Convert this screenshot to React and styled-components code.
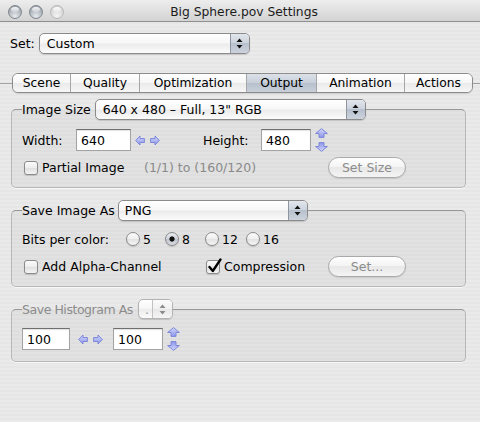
import React from 'react';
import styled, { createGlobalStyle } from 'styled-components';

const Global = createGlobalStyle`
  html, body { margin: 0; padding: 0; }
  body {
    font-family: "DejaVu Sans", "Lucida Grande", sans-serif;
    font-size: 12.5px;
    color: #000;
    background: #e8e8e8;
  }
  * { box-sizing: border-box; }
`;

const Window = styled.div`
  width: 480px;
  height: 422px;
  overflow: hidden;
  display: flex;
  flex-direction: column;
  background: repeating-linear-gradient(180deg, #eaeaea 0px, #eaeaea 2px, #e6e6e6 2px, #e6e6e6 4px);
`;

const TitleBar = styled.div`
  flex: none;
  height: 22px;
  display: grid;
  grid-template-columns: 1fr auto 1fr;
  align-items: center;
  padding: 2px 0 0 8px;
  background: linear-gradient(#ededed, #d3d3d3);
  border-bottom: 1px solid #8f8f8f;
`;

const Lights = styled.div`
  display: flex;
  gap: 7px;
  justify-self: start;
`;

const Light = styled.span`
  position: relative;
  width: 14px;
  height: 14px;
  border-radius: 50%;
  border: 1px solid ${p => (p.$dim ? '#b9b9b9' : '#80868d')};
  background: ${p =>
    p.$dim
      ? 'radial-gradient(circle at 50% 80%, #f4f4f4 0%, #dadada 55%, #cbcbcb 100%)'
      : 'radial-gradient(circle at 50% 85%, #e8ecf0 0%, #b4bac1 50%, #8f969e 100%)'};
  &::after {
    content: '';
    position: absolute;
    left: 2px;
    right: 2px;
    top: 1px;
    height: 5px;
    border-radius: 50%;
    background: linear-gradient(rgba(255, 255, 255, 0.95), rgba(255, 255, 255, 0.25));
  }
`;

const Title = styled.div`
  font-size: 12.3px;
  color: #1c1c1c;
  white-space: nowrap;
`;

const Body = styled.div`
  display: flex;
  flex-direction: column;
`;

const SetRow = styled.div`
  display: flex;
  align-items: center;
  gap: 4px;
  padding: 11px 0 0 10px;
`;

const Popup = styled.div`
  flex: none;
  width: ${p => p.$w}px;
  height: ${p => p.$h || 21}px;
  display: flex;
  border: 1px solid ${p => (p.$disabled ? '#b3b3b3' : '#8a8a8a')};
  border-radius: 5px;
  overflow: hidden;
  box-shadow: 0 1px 1px rgba(0, 0, 0, 0.14);
  background: linear-gradient(#ffffff, #f7f7f7 45%, #ececec 55%, #fbfbfb);
  color: ${p => (p.$disabled ? '#9a9a9a' : '#000')};
`;

const PopupText = styled.span`
  flex: 1;
  display: flex;
  align-items: center;
  padding-left: ${p => p.$pl ?? 7}px;
  white-space: nowrap;
  overflow: hidden;
`;

const PopupCap = styled.span`
  flex: none;
  width: ${p => p.$w || 19}px;
  display: flex;
  align-items: center;
  justify-content: center;
  border-left: 1px solid ${p => (p.$disabled ? '#c2c2c2' : '#8f96a2')};
  background: ${p =>
    p.$disabled
      ? 'linear-gradient(#fbfbfb, #f1f1f1 50%, #e7e7e7 50%, #f5f5f5)'
      : 'linear-gradient(#e2e6ed, #cbd2dc 50%, #b7c0cd 50%, #ccd3dd)'};
`;

const CapArrows = ({ color = '#111' }) => (
  <svg width="7" height="11" viewBox="0 0 7 11">
    <path d="M3.5 0.5 L6.5 4 L0.5 4 Z" fill={color} />
    <path d="M3.5 10.5 L6.5 7 L0.5 7 Z" fill={color} />
  </svg>
);

const TabStrip = styled.div`
  display: flex;
  align-items: center;
  margin-top: 19px;
`;

const TabLine = styled.div`
  flex: ${p => (p.$w ? 'none' : '1')};
  width: ${p => (p.$w ? `${p.$w}px` : 'auto')};
  height: 1px;
  background: #a2a2a2;
`;

const Tabs = styled.div`
  display: flex;
  height: 20px;
  border: 1px solid #8c8c8c;
  border-radius: 6px;
  overflow: hidden;
  box-shadow: 0 1px 1px rgba(0, 0, 0, 0.12);
`;

const Tab = styled.div`
  width: ${p => p.$w}px;
  display: flex;
  align-items: center;
  justify-content: center;
  font-size: 12.3px;
  white-space: nowrap;
  border-left: ${p => (p.$first ? 'none' : '1px solid #a6a6a6')};
  background: ${p =>
    p.$active
      ? 'linear-gradient(#dce1e8, #c8cfd9 50%, #b6bfcc 50%, #c9d0da)'
      : 'linear-gradient(#ffffff, #f6f6f6 50%, #e9e9e9 50%, #f7f7f7)'};
`;

const Group = styled.fieldset`
  margin: ${p => p.$mt}px 0 0 11px;
  width: 455px;
  min-width: 0;
  padding: ${p => p.$pt}px 10px ${p => p.$pb}px 10px;
  border: 1px solid #b7b7b7;
  border-top-color: #969696;
  border-radius: 5px;
  background: rgba(0, 0, 0, 0.03);
  box-shadow: 0 1px 0 rgba(255, 255, 255, 0.7);
  display: flex;
  flex-direction: column;
  gap: ${p => p.$gap}px;
`;

const Legend = styled.legend`
  padding: 0;
  display: flex;
  align-items: center;
  gap: ${p => p.$gap ?? 4}px;
  white-space: nowrap;
  color: ${p => (p.$disabled ? '#8c8c8c' : '#000')};
  letter-spacing: ${p => p.$ls || 0}px;
`;

const Row = styled.div`
  display: flex;
  align-items: center;
  height: ${p => p.$h}px;
`;

const Label = styled.span`
  flex: none;
  width: ${p => (p.$w ? `${p.$w}px` : 'auto')};
  margin-left: ${p => p.$ml || 0}px;
  white-space: nowrap;
  color: ${p => (p.$muted ? '#8a8a8a' : '#000')};
`;

const Field = styled.input`
  flex: none;
  width: ${p => p.$w}px;
  height: 22px;
  margin: 0 0 0 ${p => p.$ml || 0}px;
  padding: 0 0 0 4px;
  font: inherit;
  color: #000;
  background: #fff;
  border: 1px solid #a3a3a3;
  border-top-color: #6f6f6f;
  box-shadow: inset 0 1px 1px rgba(0, 0, 0, 0.12);
  outline: none;
`;

const Stepper = styled.div`
  flex: none;
  display: flex;
  flex-direction: ${p => (p.$vertical ? 'column' : 'row')};
  gap: ${p => (p.$vertical ? 4 : 5)}px;
  margin-left: ${p => p.$ml || 0}px;
`;

const ArrowDefs = () => (
  <svg width="0" height="0" style={{ position: 'absolute' }}>
    <defs>
      <linearGradient id="lav" x1="0" y1="0" x2="0" y2="1">
        <stop offset="0" stopColor="#d2d6fb" />
        <stop offset="1" stopColor="#8e98ec" />
      </linearGradient>
    </defs>
  </svg>
);

const HArrow = ({ flip }) => (
  <svg width="10" height="11" viewBox="0 0 10 11" style={flip ? { transform: 'scaleX(-1)' } : undefined}>
    <path d="M0.6 5.5 L5 1 V3.5 H9.4 V7.5 H5 V10 Z" fill="url(#lav)" stroke="#7681d6" strokeWidth="0.9" strokeLinejoin="round" />
  </svg>
);

const VArrow = ({ flip }) => (
  <svg width="13" height="10" viewBox="0 0 13 10" style={flip ? { transform: 'scaleY(-1)' } : undefined}>
    <path d="M6.5 0.6 L12.4 5.5 H9 V9.4 H4 V5.5 H0.6 Z" fill="url(#lav)" stroke="#7681d6" strokeWidth="0.9" strokeLinejoin="round" />
  </svg>
);

const LeftRight = ({ ml }) => (
  <Stepper $ml={ml}>
    <HArrow />
    <HArrow flip />
  </Stepper>
);

const UpDown = ({ ml }) => (
  <Stepper $vertical $ml={ml}>
    <VArrow />
    <VArrow flip />
  </Stepper>
);

const CheckLabel = styled.label`
  flex: none;
  width: ${p => p.$w}px;
  display: flex;
  align-items: center;
  gap: 4px;
  white-space: nowrap;
`;

const Box = styled.span`
  position: relative;
  flex: none;
  width: 14px;
  height: 14px;
  margin-left: 2px;
  border: 1px solid #8a8a8a;
  border-radius: 3px;
  background: linear-gradient(#fbfbfb, #ececec 50%, #dfdfdf 50%, #f4f4f4);
  box-shadow: 0 1px 1px rgba(0, 0, 0, 0.14);
`;

const Tick = styled.svg`
  position: absolute;
  left: 0px;
  top: -3px;
`;

const Check = ({ w, checked, children }) => (
  <CheckLabel $w={w}>
    <Box>
      {checked && (
        <Tick width="15" height="16" viewBox="0 0 15 16">
          <path d="M2.5 9 L5.8 13 L13.5 1.5" fill="none" stroke="#000" strokeWidth="2.3" strokeLinecap="round" strokeLinejoin="round" />
        </Tick>
      )}
    </Box>
    {children}
  </CheckLabel>
);

const RadioItem = styled.label`
  flex: none;
  width: ${p => (p.$w ? `${p.$w}px` : 'auto')};
  display: flex;
  align-items: center;
  gap: 3px;
`;

const RadioDot = styled.span`
  flex: none;
  width: 14px;
  height: 14px;
  border-radius: 50%;
  border: 1px solid #8a8a8a;
  box-shadow: 0 1px 1px rgba(0, 0, 0, 0.14);
  background: ${p =>
    p.$on
      ? 'radial-gradient(circle at 50% 50%, #111 0, #111 2.2px, rgba(0,0,0,0) 3px), linear-gradient(#e9ebef, #cfd4db 50%, #bfc5ce 50%, #d7dbe1)'
      : 'linear-gradient(#fcfcfc, #eeeeee 50%, #e1e1e1 50%, #f7f7f7)'};
`;

const Radio = ({ w, on, children }) => (
  <RadioItem $w={w}>
    <RadioDot $on={on} />
    {children}
  </RadioItem>
);

const PillButton = styled.button`
  flex: none;
  width: 78px;
  height: 21px;
  padding: 0;
  font: inherit;
  color: #8c8c8c;
  border: 1px solid #a9a9a9;
  border-radius: 11px;
  background: linear-gradient(#fefefe, #f3f3f3 50%, #e8e8e8 50%, #f4f4f4);
  box-shadow: 0 1px 1px rgba(0, 0, 0, 0.1);
`;

const tabs = [
  ['Scene', 57],
  ['Quality', 69],
  ['Optimization', 107],
  ['Output', 70],
  ['Animation', 88],
  ['Actions', 68],
];

export default function App() {
  return (
    <>
      <Global />
      <ArrowDefs />
      <Window>
        <TitleBar>
          <Lights>
            <Light />
            <Light />
            <Light $dim />
          </Lights>
          <Title>Big Sphere.pov Settings</Title>
          <span />
        </TitleBar>
        <Body>
          <SetRow>
            <Label>Set:</Label>
            <Popup $w={211}>
              <PopupText>Custom</PopupText>
              <PopupCap>
                <CapArrows />
              </PopupCap>
            </Popup>
          </SetRow>

          <TabStrip>
            <TabLine $w={12} />
            <Tabs>
              {tabs.map(([name, w], i) => (
                <Tab key={name} $w={w} $first={i === 0} $active={name === 'Output'}>
                  {name}
                </Tab>
              ))}
            </Tabs>
            <TabLine />
          </TabStrip>

          <Group $mt={6} $pt={9} $pb={9} $gap={6}>
            <Legend>
              Image Size
              <Popup $w={271}>
                <PopupText>640 x 480 – Full, 13" RGB</PopupText>
                <PopupCap>
                  <CapArrows />
                </PopupCap>
              </Popup>
            </Legend>
            <Row $h={22}>
              <Label $w={54}>Width:</Label>
              <Field $w={55} readOnly value="640" />
              <LeftRight ml={4} />
              <Label $w={58} $ml={43}>Height:</Label>
              <Field $w={50} readOnly value="480" />
              <UpDown ml={4} />
            </Row>
            <Row $h={21}>
              <Check w={122}>Partial Image</Check>
              <Label $w={184} $muted>(1/1) to (160/120)</Label>
              <PillButton>Set Size</PillButton>
            </Row>
          </Group>

          <Group $mt={12} $pt={10} $pb={9} $gap={9}>
            <Legend $gap={3}>
              Save Image As
              <Popup $w={190}>
                <PopupText $pl={6}>PNG</PopupText>
                <PopupCap>
                  <CapArrows />
                </PopupCap>
              </Popup>
            </Legend>
            <Row $h={16}>
              <Label $w={104}>Bits per color:</Label>
              <Radio w={39}>5</Radio>
              <Radio w={40} on>8</Radio>
              <Radio w={41}>12</Radio>
              <Radio>16</Radio>
            </Row>
            <Row $h={21}>
              <Check w={182}>Add Alpha-Channel</Check>
              <Check w={124} checked>Compression</Check>
              <PillButton>Set...</PillButton>
            </Row>
          </Group>

          <Group $mt={12} $pt={9} $pb={11} $gap={0}>
            <Legend $disabled $ls={-0.45} $gap={5}>
              Save Histogram As
              <Popup $w={35} $h={20} $disabled>
                <PopupText $pl={6}>.</PopupText>
                <PopupCap $w={20} $disabled>
                  <CapArrows color="#8a8a8a" />
                </PopupCap>
              </Popup>
            </Legend>
            <Row $h={22}>
              <Field $w={48} readOnly value="100" />
              <LeftRight ml={8} />
              <Field $w={50} $ml={10} readOnly value="100" />
              <UpDown ml={4} />
            </Row>
          </Group>
        </Body>
      </Window>
    </>
  );
}
